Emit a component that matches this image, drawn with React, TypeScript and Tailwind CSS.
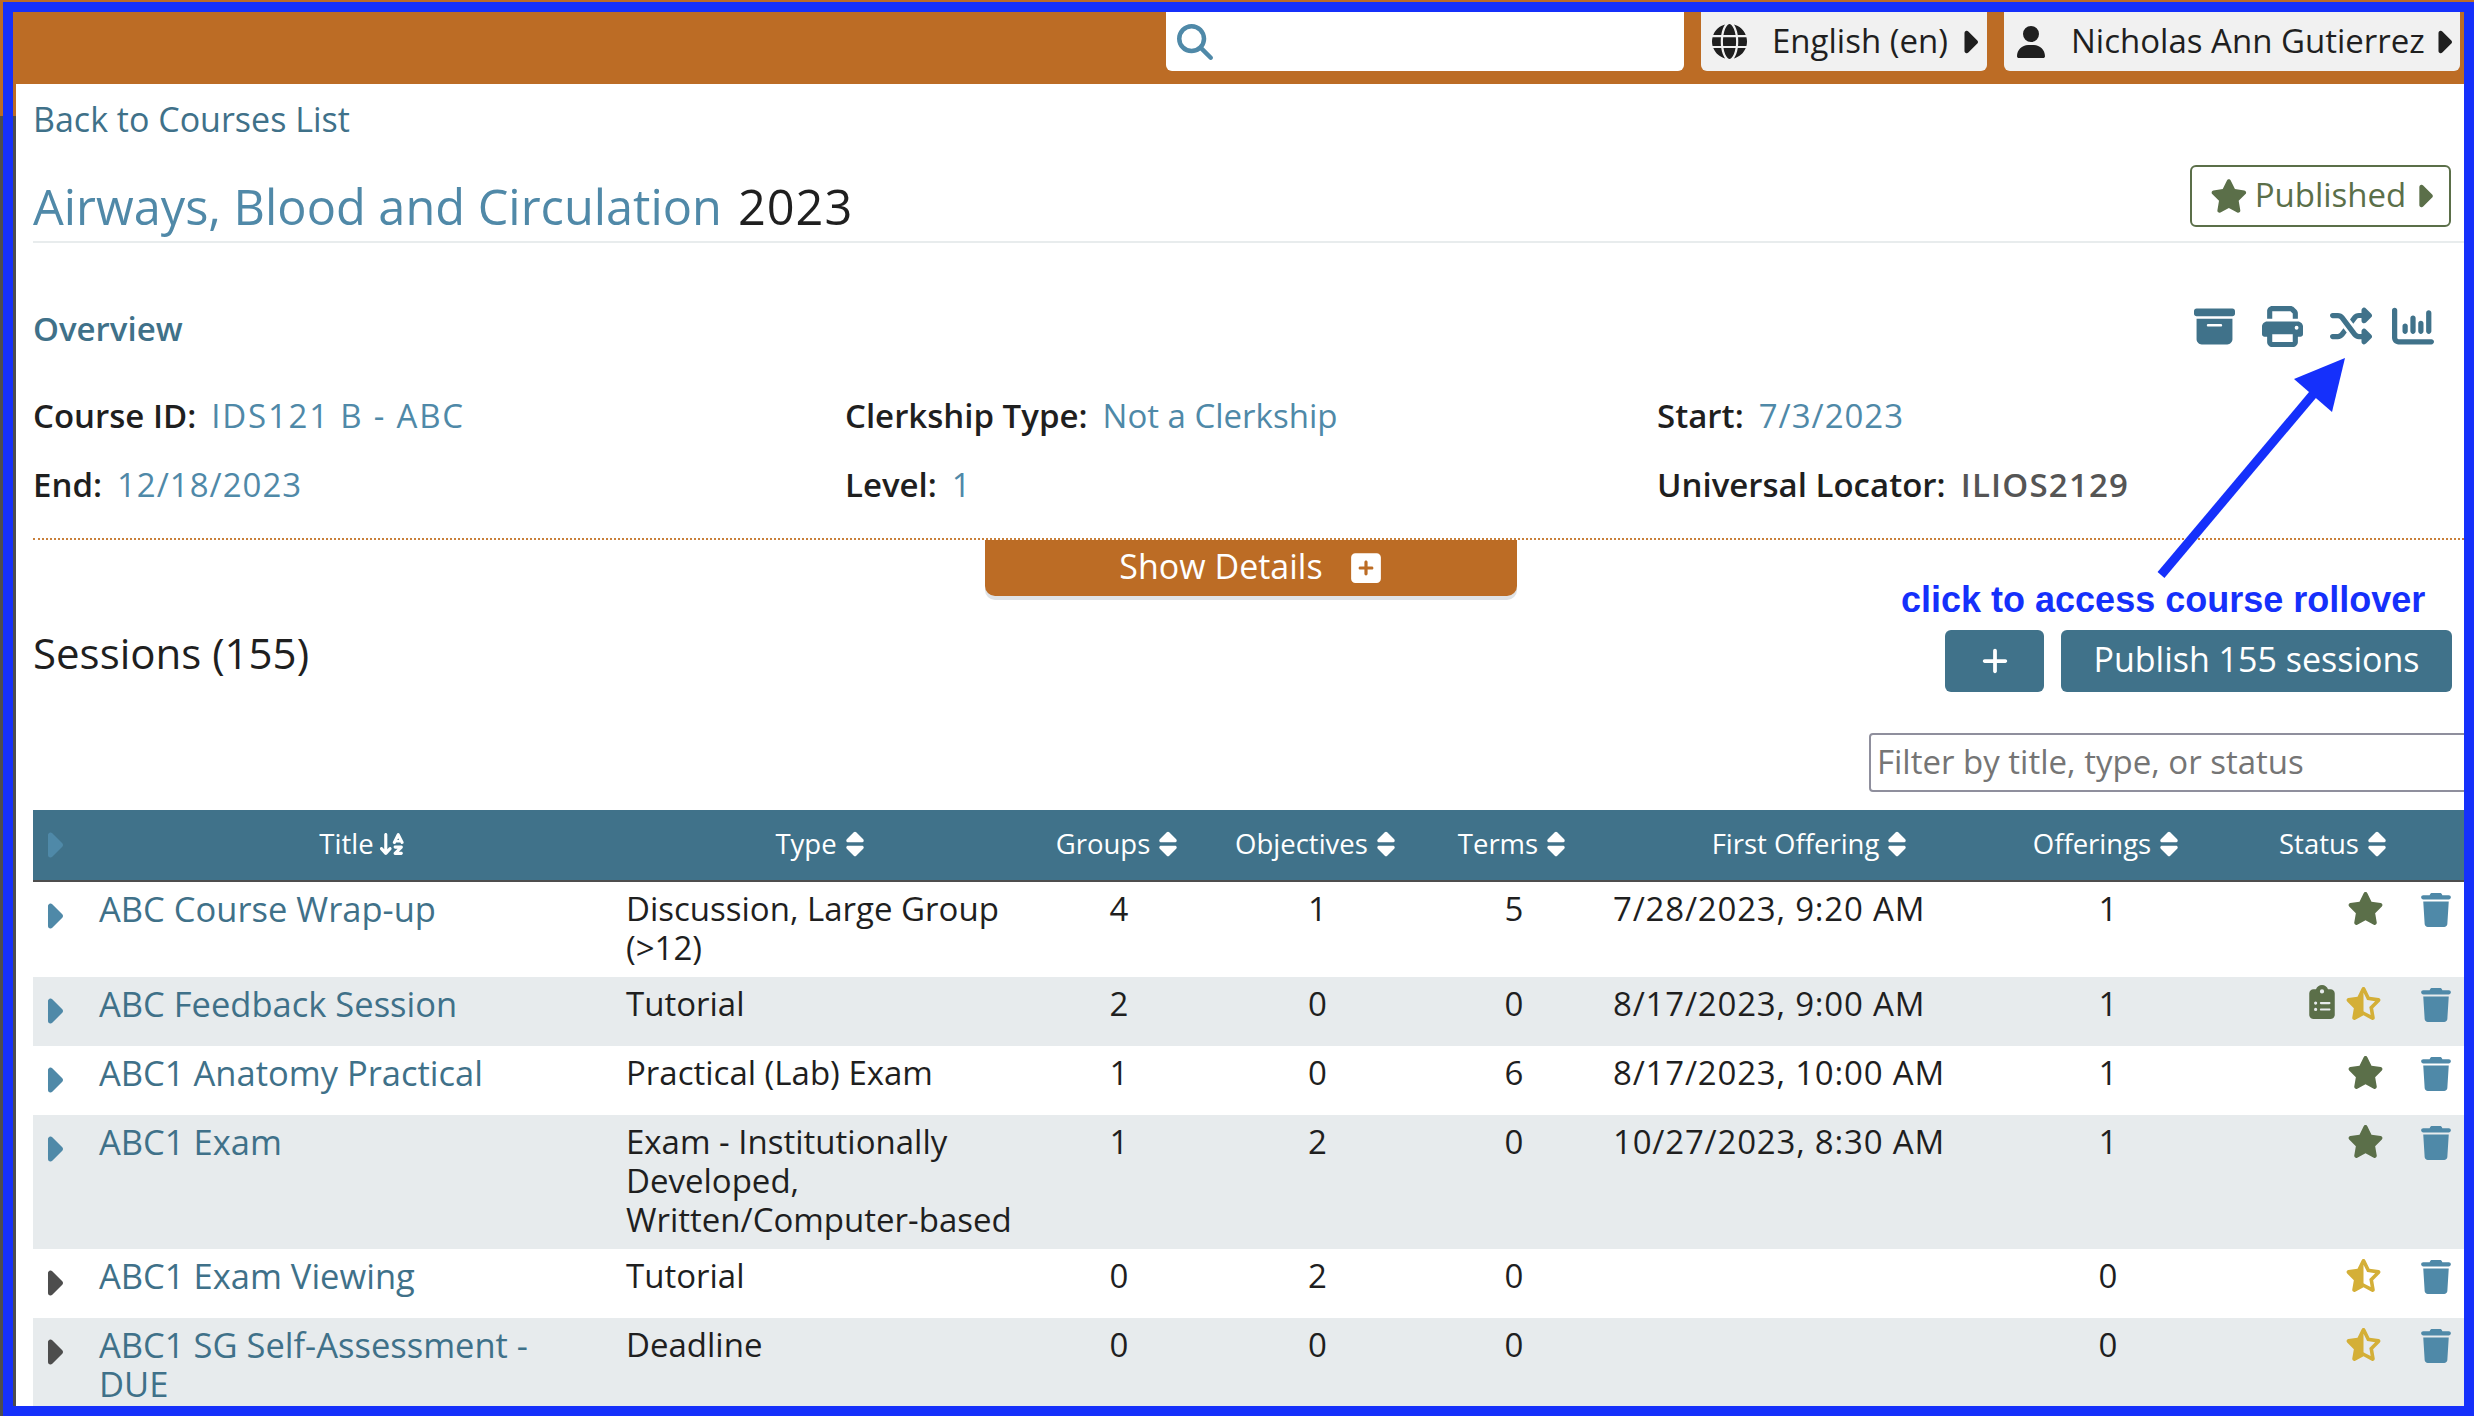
import {
  FaArrowDownAZ,
  FaBoxArchive,
  FaCaretRight,
  FaChartColumn,
  FaClipboardList,
  FaGlobe,
  FaMagnifyingGlass,
  FaPlus,
  FaPrint,
  FaShuffle,
  FaSort,
  FaSquarePlus,
  FaStar,
  FaStarHalfStroke,
  FaTrash,
  FaUser,
} from "react-icons/fa6";

interface Session {
  title: string;
  type: string;
  groups: number;
  objectives: number;
  terms: number;
  first: string;
  offerings: number;
  published: boolean;
  scheduled?: boolean;
  dark?: boolean;
}

const sessions: Session[] = [
  { title: "ABC Course Wrap-up", type: "Discussion, Large Group (>12)", groups: 4, objectives: 1, terms: 5, first: "7/28/2023, 9:20 AM", offerings: 1, published: true },
  { title: "ABC Feedback Session", type: "Tutorial", groups: 2, objectives: 0, terms: 0, first: "8/17/2023, 9:00 AM", offerings: 1, published: false, scheduled: true },
  { title: "ABC1 Anatomy Practical", type: "Practical (Lab) Exam", groups: 1, objectives: 0, terms: 6, first: "8/17/2023, 10:00 AM", offerings: 1, published: true },
  { title: "ABC1 Exam", type: "Exam - Institutionally Developed, Written/Computer-based", groups: 1, objectives: 2, terms: 0, first: "10/27/2023, 8:30 AM", offerings: 1, published: true },
  { title: "ABC1 Exam Viewing", type: "Tutorial", groups: 0, objectives: 2, terms: 0, first: "", offerings: 0, published: false, dark: true },
  { title: "ABC1 SG Self-Assessment - DUE", type: "Deadline", groups: 0, objectives: 0, terms: 0, first: "", offerings: 0, published: false, dark: true },
];

function Head({ label, icon }: { label: string; icon?: "az" }) {
  return (
    <span className="inline-flex items-center justify-center gap-[4px] pb-[3px]">
      {label}
      {icon === "az" ? <FaArrowDownAZ size={28} /> : <FaSort size={28} />}
    </span>
  );
}

function Field({ label, value, className }: { label: string; value: string; className?: string }) {
  return (
    <div className="flex items-center gap-[15px]">
      <span className="font-semibold text-[#1f1f1f]">{label}</span>
      <span className={className ?? "text-[#4f89a8]"}>{value}</span>
    </div>
  );
}

export default function App() {
  return (
    <div className="relative h-[1416px] w-full overflow-hidden bg-[linear-gradient(#bc6c25_116px,#4d4d4d_116px)] pl-[3px] pt-[2px] font-['Open_Sans',sans-serif] text-[33px] leading-[39px] text-[#1f1f1f]">
      <div className="flex h-full flex-col overflow-hidden border-[10px] border-[#1530fb]">
        <header className="flex h-[72px] shrink-0 items-start justify-end gap-[17px] bg-[#bc6c25] pr-[4px]">
          <div className="flex h-[59px] w-[518px] items-center rounded-b-[6px] bg-white pl-[11px] text-[#4f89a8]">
            <FaMagnifyingGlass size={36} />
          </div>
          <div className="flex h-[59px] w-[286px] items-center rounded-b-[6px] bg-[#f1f1f1] pl-[11px]">
            <FaGlobe size={35} className="shrink-0" />
            <span className="ml-[25px] mt-[-3px] whitespace-nowrap">English (en)</span>
            <FaCaretRight size={36} className="ml-auto shrink-0" />
          </div>
          <div className="flex h-[59px] w-[456px] items-center rounded-b-[6px] bg-[#f1f1f1] pl-[11px]">
            <FaUser size={32} className="shrink-0" />
            <span className="ml-[24px] mt-[-3px] whitespace-nowrap">Nicholas Ann Gutierrez</span>
            <FaCaretRight size={36} className="ml-auto shrink-0" />
          </div>
        </header>

        <div className="min-h-0 flex-1 bg-[linear-gradient(#bc6c25_32px,#4d4d4d_32px)] pl-[3px]">
          <main className="h-full overflow-hidden bg-white pl-[17px]">
            <a className="block pt-[16px] text-[34px] font-medium text-[#3f7189]">Back to Courses List</a>

            <div className="flex h-[104px] items-end justify-between border-b-2 border-[#e8eced]">
              <h1 className="mb-[5px] text-[48.7px] font-medium leading-[60px]">
                <span className="text-[#5089a8]">Airways, Blood and Circulation</span>
                <span className="ml-[16px] tracking-[1px] text-[#1f1f1f]">2023</span>
              </h1>
              <button className="mb-[14px] mr-[13px] flex h-[62px] w-[261px] items-center rounded-[6px] border-2 border-[#5b6f49] pl-[18px] text-[#5b6f49]">
                <FaStar size={38} />
                <span className="ml-[7px] mt-[-3px]">Published</span>
                <FaCaretRight size={36} className="ml-auto mr-[7px]" />
              </button>
            </div>

            <div className="mt-[54px] flex h-[60px] items-center justify-between pr-[30px]">
              <h2 className="mt-[2px] font-semibold text-[#3f7189]">Overview</h2>
              <div className="mb-[2px] flex items-center gap-[27px] text-[#40728a]">
                <FaBoxArchive size={41} />
                <FaPrint size={41} />
                <FaShuffle size={42} className="mr-[-7px]" />
                <FaChartColumn size={42} />
              </div>
            </div>

            <div className="mt-[24px] grid grid-cols-[812px_812px_1fr] auto-rows-[69px] items-center border-b-2 border-dotted border-[#c9803b] pb-[19px]">
              <Field label="Course ID:" value="IDS121 B - ABC" className="tracking-[1.8px] text-[#4f89a8]" />
              <Field label="Clerkship Type:" value="Not a Clerkship" />
              <Field label="Start:" value="7/3/2023" className="tracking-[1px] text-[#4f89a8]" />
              <Field label="End:" value="12/18/2023" className="tracking-[1px] text-[#4f89a8]" />
              <Field label="Level:" value="1" />
              <Field label="Universal Locator:" value="ILIOS2129" className="font-semibold tracking-[1.2px] text-[#555555]" />
            </div>

            <button className="ml-[952px] flex h-[56px] w-[532px] items-center justify-center gap-[26px] rounded-b-[10px] bg-[#bc6c25] pb-[3px] text-[34px] text-white shadow-[0_4px_0_#e0e3e6]">
              Show Details
              <FaSquarePlus size={34} className="mt-[3px]" />
            </button>

            <div className="mt-[34px] flex items-start justify-between pr-[12px]">
              <h2 className="text-[42px] leading-[46px]">Sessions (155)</h2>
              <div className="flex gap-[17px] text-white">
                <button className="flex h-[62px] w-[99px] items-center justify-center rounded-[6px] bg-[#40728a]">
                  <FaPlus size={30} />
                </button>
                <button className="h-[62px] w-[391px] rounded-[6px] bg-[#40728a] pb-[4px] text-[34px]">Publish 155 sessions</button>
              </div>
            </div>

            <div className="mt-[41px] overflow-hidden">
              <input
                placeholder="Filter by title, type, or status"
                className="ml-[1836px] block h-[59px] w-[640px] rounded-[4px] border-2 border-[#8f8f9d] pb-[3px] pl-[6px] placeholder:text-[#757575]"
              />
            </div>

            <table className="mt-[18px] w-[2431px] table-fixed border-collapse">
              <colgroup>
                <col className="w-[66px]" />
                <col className="w-[527px]" />
                <col className="w-[392px]" />
                <col className="w-[202px]" />
                <col className="w-[195px]" />
                <col className="w-[198px]" />
                <col className="w-[397px]" />
                <col className="w-[196px]" />
                <col className="w-[258px]" />
              </colgroup>
              <thead>
                <tr className="h-[71px] border-b-2 border-[#4d4d4d] bg-[#40728a] text-[27.5px] text-white">
                  <th className="text-left text-[#4f89a8]">
                    <FaCaretRight size={40} />
                  </th>
                  <th className="font-normal"><Head label="Title" icon="az" /></th>
                  <th className="font-normal"><Head label="Type" /></th>
                  <th className="font-normal"><Head label="Groups" /></th>
                  <th className="font-normal"><Head label="Objectives" /></th>
                  <th className="font-normal"><Head label="Terms" /></th>
                  <th className="font-normal"><Head label="First Offering" /></th>
                  <th className="font-normal"><Head label="Offerings" /></th>
                  <th className="font-normal"><Head label="Status" /></th>
                </tr>
              </thead>
              <tbody>
                {sessions.map((s, i) => (
                  <tr key={s.title} className={`h-[69px] align-top ${i % 2 === 1 ? "bg-[#e7ebed]" : "bg-white"}`}>
                    <td className={`pt-[14px] ${s.dark ? "text-[#4d4d4d]" : "text-[#4f89a8]"}`}>
                      <FaCaretRight size={40} />
                    </td>
                    <td className="pb-[10px] pr-[40px] pt-[7px] text-[34.5px] font-medium text-[#3f7189]">{s.title}</td>
                    <td className="pb-[10px] pt-[7px]">{s.type}</td>
                    <td className="pb-[10px] pt-[7px] text-center">{s.groups}</td>
                    <td className="pb-[10px] pt-[7px] text-center">{s.objectives}</td>
                    <td className="pb-[10px] pt-[7px] text-center">{s.terms}</td>
                    <td className="pb-[10px] pt-[7px] tracking-[0.8px]">{s.first}</td>
                    <td className="pb-[10px] pt-[7px] text-center">{s.offerings}</td>
                    <td className="pt-[8px]">
                      <div className="flex items-start justify-end gap-[6px] pr-[11px]">
                        {s.scheduled && <FaClipboardList size={34} className="text-[#5b6f49]" />}
                        {s.published ? (
                          <FaStar size={37} className="mr-[4px] text-[#5b6f49]" />
                        ) : (
                          <FaStarHalfStroke size={37} className="mr-[6px] text-[#d4af37]" />
                        )}
                        <FaTrash size={34} className="ml-[25px] mt-[3px] text-[#4f89a8]" />
                      </div>
                    </td>
                  </tr>
                ))}
              </tbody>
            </table>
          </main>
        </div>
      </div>

      <svg className="pointer-events-none absolute left-0 top-0" width="2474" height="1416">
        <line x1="2161" y1="575" x2="2315" y2="392" stroke="#1530fb" strokeWidth="9" />
        <polygon points="2345,358 2294,379 2332,412" fill="#1530fb" />
      </svg>
      <div className="absolute left-[1901px] top-[578px] font-['Liberation_Sans',sans-serif] text-[36px] font-bold leading-[44px] text-[#1530fb]">
        click to access course rollover
      </div>
    </div>
  );
}
